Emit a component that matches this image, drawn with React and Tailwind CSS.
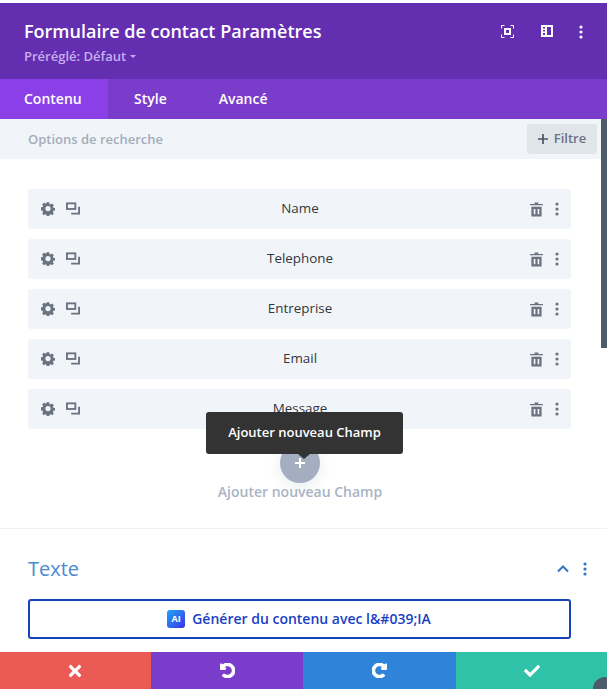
import React from "react";
import { FaTimes, FaCheck, FaUndoAlt, FaRedoAlt } from "react-icons/fa";

const Gear = () => (
  <svg width="15" height="15" viewBox="0 0 16 16" fill="#6b7280" className="mt-[-2px]">
    <path fillRule="evenodd" d="M6.6 0.8h2.8l.4 2 1.2.5 1.7-1.1 2 2-1.1 1.7.5 1.2 2 .4v2.8l-2 .4-.5 1.2 1.1 1.7-2 2-1.7-1.1-1.2.5-.4 2H6.6l-.4-2-1.2-.5-1.7 1.1-2-2 1.1-1.7-.5-1.2-2-.4V6.6l2-.4.5-1.2-1.1-1.7 2-2L4.999 2.400l1.2-.5zM8 5a3 3 0 1 0 0 6 3 3 0 0 0 0-6z" />
  </svg>
);
const Clone = () => (
  <svg width="15" height="13" viewBox="0 0 15 13" fill="none" stroke="#6b7280" strokeWidth="2" className="mt-[-2px]">
    <rect x="1" y="1" width="9" height="6" />
    <path d="M14 4.500V12H5.500" />
  </svg>
);
const Trash = () => (
  <svg width="13" height="15" viewBox="0 0 14 15" fill="#6b7280">
    <path d="M5 0h4v1.500h5V3H0V1.500h5z" />
    <path fillRule="evenodd" d="M1.500 4.500h11V15h-11zM4 7v5.500h1.800V7zm4.200 0v5.500H10V7z" />
  </svg>
);
const Dots = ({ color = "#6b7280", className = "" }) => (
  <svg width="4" height="14" viewBox="0 0 4 14" fill={color} className={className}>
    <circle cx="2" cy="2" r="1.600" />
    <circle cx="2" cy="7" r="1.600" />
    <circle cx="2" cy="12" r="1.600" />
  </svg>
);

const Row = ({ label }) => (
  <div className="h-10 rounded-[3px] bg-[#f1f5f9] flex items-center pl-[13px] pr-[10px]">
    <div className="flex items-center gap-[11px] w-[39px]">
      <Gear />
      <Clone />
    </div>
    <div className="flex-1 mb-[2px] text-center text-[13.4px] font-medium text-[#32373c] pr-[10px]">{label}</div>
    <div className="flex items-center gap-[13px] w-[30px] mr-[1px]">
      <Trash />
      <Dots className="ml-[-1px]" />
    </div>
  </div>
);

export default function App() {
  return (
    <div
      className="relative w-[607px] h-[689px] overflow-hidden bg-white flex flex-col"
      style={{ fontFamily: '"Open Sans", sans-serif' }}
    >
      <div className="h-[3px] bg-white" />
      <header className="h-[76px] bg-[#642eb0] flex pl-6 pr-[24px]">
        <div className="flex-1 pt-[16px]">
          <div className="text-[18px] leading-[25px] font-semibold text-white">Formulaire de contact Paramètres</div>
          <div className="mt-[4px] text-[13px] leading-[17px] font-semibold text-[#c9aef0] flex items-center gap-[4px]">
            Préréglé: Défaut
            <span className="w-0 h-0 border-x-[3px] border-x-transparent border-t-[3px] border-t-[#c9aef0]" />
          </div>
        </div>
        <div className="flex items-start gap-[27px] pt-[22px]">
          <svg width="13" height="13" viewBox="0 0 13 13" fill="none" stroke="#fff" strokeWidth="1">
            <path d="M3.500.500h-3v3M9.500.500h3v3M3.500 12.500h-3v-3M9.500 12.500h3v-3" />
            <rect x="4" y="4" width="5" height="5" strokeWidth="2" />
          </svg>
          <svg width="12" height="12" viewBox="0 0 12 12" fill="#fff">
            <path fillRule="evenodd" d="M0 0h12v12H0zM6 2v8h4V2zM2 2v1.500h2V2zm0 3v1.500h2V5zm0 3v2h2V8z" />
          </svg>
          <Dots color="#fff" className="mt-[-0.5px] ml-[-1px]" />
        </div>
      </header>

      <nav className="h-10 bg-[#7a3ccb] flex text-[14px] font-semibold text-white">
        <div className="w-[108px] pl-6 pb-[2px] bg-[#8a40e6] flex items-center">Contenu</div>
        <div className="ml-[26px] pb-[2px] flex items-center">Style</div>
        <div className="ml-[52px] pb-[2px] flex items-center">Avancé</div>
      </nav>

      <div className="h-10 bg-[#f1f5f9] flex items-center pl-[28px] pr-[10px] justify-between">
        <span className="mt-[2px] text-[13px] font-semibold text-[#a3adba]">Options de recherche</span>
        <div className="w-[70px] h-[30px] rounded-[3px] bg-[#e0e5ea] flex items-center justify-center gap-[6px] text-[13px] font-semibold text-[#6b7280]">
          <svg width="10" height="10" viewBox="0 0 10 10" stroke="#4b5563" strokeWidth="1.700"><path d="M5 0v10M0 5h10" /></svg>
          Filtre
        </div>
      </div>

      <div className="flex flex-col gap-[10px] px-[28px] pr-[36px] pt-[30px]">
        {["Name", "Telephone", "Entreprise", "Email", "Message"].map((l) => (
          <Row key={l} label={l} />
        ))}
      </div>

      <div className="flex flex-col items-center mt-[14px] pr-[7px]">
        <div className="w-10 h-10 rounded-full bg-[#a3afc1] flex items-center justify-center shadow-[0_4px_14px_rgba(163,175,193,0.25)]">
          <svg width="10" height="10" viewBox="0 0 10 10" stroke="#fff" strokeWidth="2"><path d="M5 0v10M0 5h10" /></svg>
        </div>
        <div className="mt-[1px] text-[14px] leading-[16px] font-semibold text-[#a9b4c4]">Ajouter nouveau Champ</div>
      </div>

      <div className="mt-[28px] border-t border-[#eef1f5] px-[28px] pr-[36px]">
        <div className="flex items-center h-[26px] mt-[27px]">
          <span className="flex-1 text-[20px] leading-[26px] text-[#4a8ad0]">Texte</span>
          <svg width="12" height="8" viewBox="0 0 12 8" fill="none" stroke="#2e76c4" strokeWidth="2" className="mr-[14px]"><path d="M1 6.500l5-5 5 5" /></svg>
          <Dots color="#2e76c4" className="mr-[-16px]" />
        </div>
        <div className="mt-[17px] h-10 rounded-[3px] border-2 border-[#1345b8] flex items-center justify-center gap-[7px]">
          <div className="w-[18px] h-[18px] ml-[-1px] rounded-[3px] bg-gradient-to-br from-[#1fa2f5] to-[#3a22e8] flex items-center justify-center text-[9px] font-bold text-white">AI</div>
          <span className="mb-[2px] text-[14px] font-semibold text-[#1a3fc4]">Générer du contenu avec l&amp;#039;IA</span>
        </div>
      </div>

      <footer className="mt-auto h-[37px] flex">
        <div className="w-[151px] pr-[2px] bg-[#ec5a56] flex items-center justify-center">
          <FaTimes size={18} color="#fff" />
        </div>
        <div className="w-[152px] bg-[#7a3ccb] flex items-center justify-center">
          <FaUndoAlt size={15} color="#fff" stroke="#fff" strokeWidth={40} />
        </div>
        <div className="w-[153px] bg-[#2f84d9] flex items-center justify-center">
          <FaRedoAlt size={15} color="#fff" stroke="#fff" strokeWidth={40} />
        </div>
        <div className="flex-1 bg-[#2fc2a8] flex items-center justify-center">
          <FaCheck size={16} color="#fff" />
        </div>
      </footer>

      {/* overlays */}
      <div className="absolute left-[601px] top-[119px] w-[6px] h-[229px] bg-[#4d5b6b]" />
      <div className="absolute left-[206px] top-[412px] w-[197px] h-[42px] rounded-[3px] bg-[#333333] flex items-center justify-center text-[13px] font-semibold text-white">
        Ajouter nouveau Champ
        <span className="absolute left-[92px] top-[42px] w-0 h-0 border-x-[6px] border-x-transparent border-t-[5px] border-t-[#333333]" />
      </div>
      <div className="absolute left-[593px] top-[677px] w-[24px] h-[24px] rounded-full bg-[#4d5b6b]" />
    </div>
  );
}
